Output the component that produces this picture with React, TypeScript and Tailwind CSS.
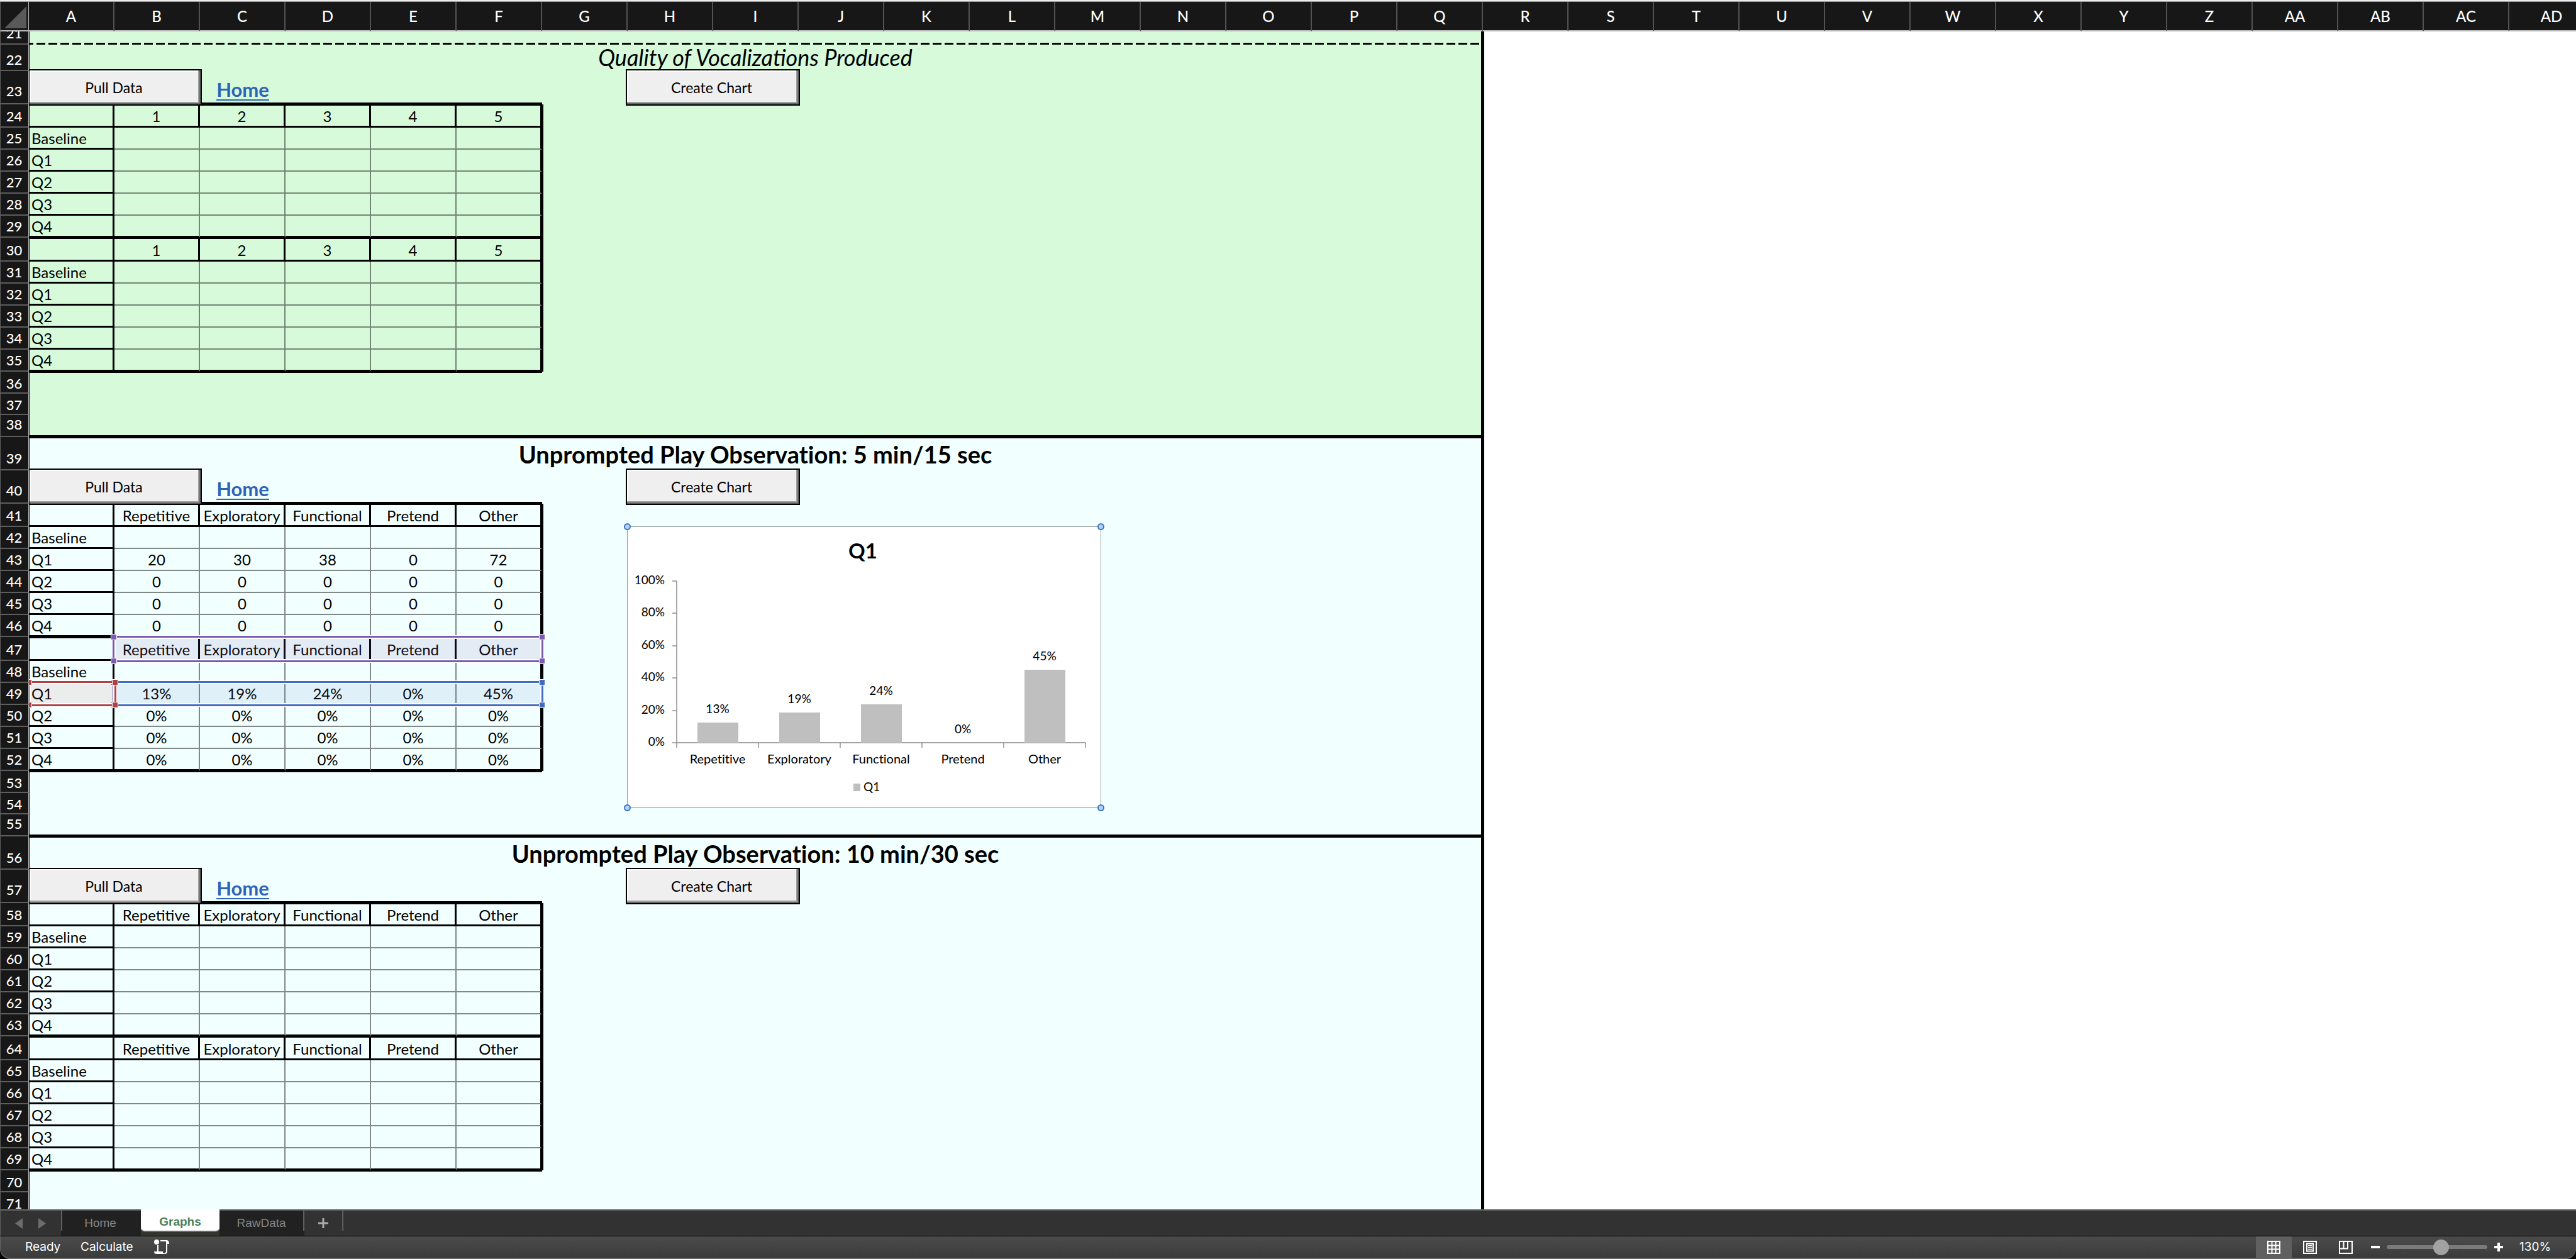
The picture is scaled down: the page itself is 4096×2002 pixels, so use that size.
import React from "react";

type Cells = string[];

const COLUMNS = [
  "A", "B", "C", "D", "E", "F", "G", "H", "I", "J", "K", "L", "M", "N", "O",
  "P", "Q", "R", "S", "T", "U", "V", "W", "X", "Y", "Z", "AA", "AB", "AC", "AD",
];

const PERIODS = ["Baseline", "Q1", "Q2", "Q3", "Q4"];
const LEVELS: Cells = ["1", "2", "3", "4", "5"];
const PLAY_TYPES: Cells = ["Repetitive", "Exploratory", "Functional", "Pretend", "Other"];
const EMPTY: Cells = ["", "", "", "", ""];
const ZEROS: Cells = ["0", "0", "0", "0", "0"];
const ZERO_PCT: Cells = ["0%", "0%", "0%", "0%", "0%"];

const BLANK_GROUP: Cells[] = [EMPTY, EMPTY, EMPTY, EMPTY, EMPTY];
const COUNTS: Cells[] = [EMPTY, ["20", "30", "38", "0", "72"], ZEROS, ZEROS, ZEROS];
const PERCENTS: Cells[] = [EMPTY, ["13%", "19%", "24%", "0%", "45%"], ZERO_PCT, ZERO_PCT, ZERO_PCT];

function RowNumber({ n, pad = "pb-[2px]" }: { n: number; pad?: string }) {
  return (
    <th
      scope="row"
      className={`relative z-20 border-r border-b-2 border-l border-r-[#b8b8b8] border-b-[#5e5e5e] border-l-[#5e5e5e] bg-[#171717] pr-px pl-0 text-center align-bottom text-[22px] font-medium text-white ${pad}`}
    >
      {n}
    </th>
  );
}

function Outside() {
  return <td colSpan={13} className="border-l-2 border-black bg-white p-0" />;
}

function FormButton({ label, className }: { label: string; className: string }) {
  return (
    <button
      type="button"
      className={`absolute z-10 h-[58px] border-2 border-black bg-[#efefef] pr-1 text-center text-[23px] text-black shadow-[inset_-2px_-2px_0_#666,inset_-4px_-4px_0_#a0a0a0,inset_2px_2px_0_#fff] ${className}`}
    >
      {label}
    </button>
  );
}

function RangeBox({ className, handle }: { className: string; handle: string }) {
  const base = `absolute size-2 outline-1 outline-white ${handle}`;
  return (
    <div className={`pointer-events-none absolute border-[3px] shadow-[inset_0_0_0_2px_#fff] outline-1 outline-white ${className}`}>
      <span className={`${base} -top-[5px] -left-[5px]`} />
      <span className={`${base} -top-[5px] -right-[5px]`} />
      <span className={`${base} -bottom-[5px] -left-[5px]`} />
      <span className={`${base} -right-[5px] -bottom-[5px]`} />
    </div>
  );
}

const BARS = [
  { name: "Repetitive", label: "13%", top: 312 },
  { name: "Exploratory", label: "19%", top: 296 },
  { name: "Functional", label: "24%", top: 283 },
  { name: "Pretend", label: "0%", top: 344 },
  { name: "Other", label: "45%", top: 228 },
];
const AXIS = ["100%", "80%", "60%", "40%", "20%", "0%"];
const AXIS_Y = [87, 138, 190, 241, 293, 344];
const TICK_X = [79, 209, 339, 469, 599, 729];

function Chart() {
  const knob = "absolute size-[11px] rounded-full border-2 border-[#3f76c4] bg-[#b3d2f7]";
  return (
    <div className="absolute -top-px -left-px z-10 h-[448px] w-[754px] border border-[#8f9696] bg-white">
      <svg viewBox="1 1 752 446" className="block h-full w-full [font-variant-ligatures:none]" role="img" aria-label="Q1 column chart">
        <text x="375" y="51" textAnchor="middle" className="text-[33px] font-bold">Q1</text>
        <g className="stroke-[#868686]" strokeWidth="1.4" fill="none">
          <path d="M79 87V344H729" />
          {AXIS_Y.map((y) => <path key={y} d={`M72 ${y}H79`} />)}
          {TICK_X.map((x) => <path key={x} d={`M${x} 344V352`} />)}
        </g>
        <g className="text-[19px]">
          {AXIS.map((t, i) => (
            <text key={t} x="60" y={AXIS_Y[i] + 5} textAnchor="end">{t}</text>
          ))}
          {BARS.map((b, i) => (
            <g key={b.name}>
              <rect x={112 + i * 130} y={b.top} width="65" height={344 - b.top} fill="#bfbfbf" />
              <text x={144 + i * 130} y={b.top - 15} textAnchor="middle">{b.label}</text>
              <text x={144 + i * 130} y="377" textAnchor="middle" className="text-[20px]">{b.name}</text>
            </g>
          ))}
          <rect x="360" y="409" width="11" height="12" fill="#bfbfbf" />
          <text x="376" y="421">Q1</text>
        </g>
      </svg>
      <span className={`${knob} -top-1.5 -left-1.5`} />
      <span className={`${knob} -top-1.5 -right-1.5`} />
      <span className={`${knob} -bottom-1.5 -left-1.5`} />
      <span className={`${knob} -right-1.5 -bottom-1.5`} />
    </div>
  );
}

function HeadRow({ n, tall, labels, bg, children }: {
  n: number; tall?: boolean; labels: Cells; bg: string; children?: React.ReactNode;
}) {
  return (
    <tr className={tall ? "h-[38px]" : "h-[37px]"}>
      <RowNumber n={n} />
      <td className={`border-t-2 border-r-3 border-b-3 border-l border-black p-0 ${bg}`} />
      {labels.map((t, i) => (
        <td key={i} className={`relative border-t-2 border-r-3 border-b-3 border-black p-0 pb-px text-center align-bottom ${bg}`}>
          {t}
          {i === 0 && children}
        </td>
      ))}
      <td colSpan={11} className={`border-r-3 border-l-2 border-black p-0 ${bg}`} />
      <Outside />
    </tr>
  );
}

function DataRow({ n, label, values, last, bg, first, overlayA, overlayB, chart }: {
  n: number; label: string; values: Cells; last: boolean; bg: string; first?: boolean;
  overlayA?: React.ReactNode; overlayB?: React.ReactNode; chart?: React.ReactNode;
}) {
  return (
    <tr className="h-[35px]">
      <RowNumber n={n} />
      <td className={`relative border-r-3 border-b-3 border-l border-black p-0 pb-px pl-[3px] text-left align-bottom ${bg}`}>
        {label}
        {overlayA}
      </td>
      {values.map((v, i) => (
        <td
          key={i}
          className={`relative p-0 text-center align-bottom ${bg} ${
            last ? "border-b-3 border-b-black pb-px" : "border-b-2 border-b-[#0007] pb-[2px]"
          } ${i === 4 ? "border-r-3 border-r-black" : "border-r-2 border-r-[#0007]"}`}
        >
          {v}
          {i === 0 && overlayB}
        </td>
      ))}
      {first && chart ? (
        <>
          <td className={`border-l-2 border-black p-0 ${bg}`} />
          <td colSpan={10} className={`relative border-r-3 border-black p-0 ${bg}`}>{chart}</td>
        </>
      ) : (
        <td colSpan={11} className={`border-r-3 border-l-2 border-black p-0 ${bg}`} />
      )}
      <Outside />
    </tr>
  );
}

function Section({ start, title, titleStyle, firstBlock, labels, bg, counts, percents, linked, blanks }: {
  start: number; title: string; titleStyle: string; firstBlock?: boolean; labels: Cells; bg: string;
  counts: Cells[]; percents: Cells[]; linked?: boolean; blanks: string[];
}) {
  return (
    <>
      <tr className={firstBlock ? "h-[42px]" : "h-[53px]"}>
        <RowNumber n={start} pad={firstBlock ? "pb-[2px]" : "pb-[3px]"} />
        <td
          colSpan={17}
          className={`border-r-3 border-l border-black p-0 text-center align-bottom ${bg} ${firstBlock ? "" : "border-t-2"} ${titleStyle}`}
        >
          {title}
        </td>
        <Outside />
      </tr>
      <tr className="h-[53px]">
        <RowNumber n={start + 1} pad="pb-[5px]" />
        <td colSpan={2} className={`relative border-b-3 border-l border-black p-0 align-top ${bg}`}>
          <FormButton label="Pull Data" className="-top-[3px] left-0 w-[274px] border-l-0" />
        </td>
        <td className={`border-b-3 border-black p-0 pb-[3px] text-center align-bottom ${bg}`}>
          <a href="#home" className="text-[31px] leading-9 font-bold text-[#2d63b8] underline decoration-2 underline-offset-4">Home</a>
        </td>
        <td colSpan={3} className={`border-b-3 border-black p-0 ${bg}`} />
        <td className={`p-0 ${bg}`} />
        <td colSpan={10} className={`relative border-r-3 border-black p-0 align-top ${bg}`}>
          <FormButton label="Create Chart" className="-top-[3px] -left-[3px] w-[277px]" />
        </td>
        <Outside />
      </tr>
      <HeadRow n={start + 2} labels={labels} bg={bg} />
      {PERIODS.map((p, i) => (
        <DataRow key={p} n={start + 3 + i} label={p} values={counts[i]} last={i === 4} first={i === 0} bg={bg} chart={linked && <Chart />} />
      ))}
      <HeadRow n={start + 8} tall labels={labels} bg={bg}>
        {linked && (
          <RangeBox className="-top-[4px] -left-[3px] z-10 h-[42px] w-[685px] border-[#7a5ab0] bg-[#7a5ab0]/12" handle="bg-[#7a5ab0]" />
        )}
      </HeadRow>
      {PERIODS.map((p, i) => (
        <DataRow
          key={p}
          n={start + 9 + i}
          label={p}
          values={percents[i]}
          last={i === 4}
          bg={bg}
          overlayA={linked && i === 1 && (
            <RangeBox className="-top-[3px] -left-[3px] z-12 h-[40px] w-[141px] border-[#b04044] bg-[#b04044]/10" handle="bg-[#b04044]" />
          )}
          overlayB={linked && i === 1 && (
            <RangeBox className="-top-[3px] -left-[3px] z-11 h-[40px] w-[685px] border-[#426bc2] bg-[#426bc2]/10" handle="bg-[#426bc2]" />
          )}
        />
      ))}
      {blanks.map((h, i) => (
        <tr key={i} className={h}>
          <RowNumber n={start + 14 + i} pad={i === 2 ? "pb-[4px]" : "pb-0"} />
          <td colSpan={6} className={`border-l border-black p-0 ${bg} ${i === 0 ? "border-t-2" : ""} ${i === 2 ? "border-b-3" : ""}`} />
          <td colSpan={11} className={`border-r-3 border-black p-0 ${bg} ${i === 2 ? "border-b-3" : ""}`} />
          <Outside />
        </tr>
      ))}
    </>
  );
}

function Sheet() {
  return (
    <table className="w-full table-fixed border-separate border-spacing-0 text-[24px] leading-7 text-black">
      <colgroup>
        <col className="w-[46px]" />
        {COLUMNS.map((c) => <col key={c} className={c === "AD" ? "" : "w-[136px]"} />)}
      </colgroup>
      <thead>
        <tr className="h-[47px]">
          <th className="border-r border-b-2 border-l border-r-[#b8b8b8] border-b-[#b8b8b8] border-l-[#5e5e5e] bg-[#171717] p-0">
            <svg viewBox="0 0 44 45" className="block h-[45px] w-[44px]" aria-hidden="true">
              <path d="M6 42H41V7Z" fill="#595959" />
            </svg>
          </th>
          {COLUMNS.map((c) => (
            <th
              key={c}
              scope="col"
              className={`border-b-2 border-b-[#b8b8b8] bg-[#171717] p-0 pt-px text-center font-medium text-white ${
                c === "AD" ? "pl-7" : "border-r-2 border-r-[#525252]"
              }`}
            >
              {c}
            </th>
          ))}
        </tr>
      </thead>
      <tbody>
        <tr className="h-[21px]">
          <th scope="row" className="border-r border-b-2 border-l border-r-[#b8b8b8] border-b-[#5e5e5e] border-l-[#5e5e5e] bg-[#171717] p-0 align-bottom text-[22px] font-medium text-white">
            <div className="flex h-[19px] items-end justify-center overflow-hidden pr-px pb-[2px]">21</div>
          </th>
          <td colSpan={17} className="border-r-3 border-l border-black bg-[#d7fadb] p-0 align-bottom">
            <div className="h-[3px] bg-[repeating-linear-gradient(to_right,#000_0_6px,transparent_6px_11px,#000_11px_19px)]" />
          </td>
          <Outside />
        </tr>
        <Section
          start={22}
          title="Quality of Vocalizations Produced"
          titleStyle="text-[36px] leading-[38px] italic pb-[3px]"
          firstBlock
          labels={LEVELS}
          bg="bg-[#d7fadb]"
          counts={BLANK_GROUP}
          percents={BLANK_GROUP}
          blanks={["h-[35px]", "h-[34px]", "h-[35px]"]}
        />
        <Section
          start={39}
          title="Unprompted Play Observation: 5 min/15 sec"
          titleStyle="text-[38px] leading-[44px] font-bold pb-[4px] [font-variant-ligatures:none]"
          labels={PLAY_TYPES}
          bg="bg-[#f2ffff]"
          counts={COUNTS}
          percents={PERCENTS}
          linked
          blanks={["h-[35px]", "h-[34px]", "h-[35px]"]}
        />
        <Section
          start={56}
          title="Unprompted Play Observation: 10 min/30 sec"
          titleStyle="text-[38px] leading-[44px] font-bold pb-[4px] [font-variant-ligatures:none]"
          labels={PLAY_TYPES}
          bg="bg-[#f2ffff]"
          counts={BLANK_GROUP}
          percents={BLANK_GROUP}
          blanks={["h-[35px]", "h-[34px]"]}
        />
      </tbody>
    </table>
  );
}

function TabBar() {
  const rule = "mb-2 border-l-2 border-[#5f5f5f]";
  return (
    <nav className="flex h-[42px] shrink-0 border-t-2 border-l border-[#666] border-l-[#5e5e5e] bg-[#323232] text-[19px] text-[#858585]" aria-label="Sheets">
      <div className="flex w-[96px] items-center gap-[25px] pl-[23px]">
        <button type="button" aria-label="Previous sheet">
          <svg viewBox="0 0 12 17" className="block h-[17px] w-[12px]"><path d="M12 0V17L0 8.5Z" fill="#6c6c6c" /></svg>
        </button>
        <button type="button" aria-label="Next sheet">
          <svg viewBox="0 0 12 17" className="block h-[17px] w-[12px]"><path d="M0 0V17L12 8.5Z" fill="#6c6c6c" /></svg>
        </button>
      </div>
      <div className="flex w-[127px] bg-[#212121]">
        <span className={rule} />
        <button type="button" className="flex-1 pr-1">Home</button>
      </div>
      <div className="-mt-0.5 w-[125px] bg-[#33332f]">
        <button type="button" aria-current="page" className="h-[36px] w-full rounded-b-md border-b-2 border-[#6a6a70] bg-white pt-1.5 font-bold text-[#477f57]">Graphs</button>
      </div>
      <div className="flex w-[135px] bg-[#212121]">
        <button type="button" className="flex-1">RawData</button>
        <span className={rule} />
      </div>
      <button type="button" aria-label="Add sheet" className="flex w-[60px] items-center justify-center">
        <svg viewBox="0 0 16 16" className="size-4"><path d="M8 0V16M0 8H16" stroke="#aaa" strokeWidth="3" /></svg>
      </button>
      <span className={rule} />
    </nav>
  );
}

function StatusBar() {
  const view = "flex w-[57px] items-center justify-center";
  return (
    <footer className="mt-px flex h-[36px] shrink-0 items-stretch rounded-b-2xl border-b-2 border-l border-[#666] bg-linear-to-b from-[#4b4b4b] to-[#3b3b3b] pl-[39px] font-[Inter,'Liberation_Sans',sans-serif] text-[19px] text-white">
      <span className="w-[88px] self-center">Ready</span>
      <span className="w-[117px] self-center">Calculate</span>
      <button type="button" aria-label="Record macro" className="self-center">
        <svg viewBox="0 0 24 24" className="block size-6">
          <circle cx="4" cy="4" r="4" fill="#fff" />
          <path d="M6 9V19" stroke="#fff" strokeWidth="2" />
          <path d="M10 2H20V19Q20 22 17 22" stroke="#fff" strokeWidth="2" fill="none" />
          <path d="M19 1H20Q24 1 24 7H19Z" fill="#fff" />
          <path d="M0 19H14V20Q14 22 17 22V23H4Q0 23 0 19Z" fill="#fff" />
        </svg>
      </button>
      <div className="ml-auto flex">
        <button type="button" aria-label="Normal view" className={`${view} bg-[#606060]`}>
          <svg viewBox="0 0 21 21" className="size-[21px]" fill="none" stroke="#fff" strokeWidth="2">
            <path d="M1 1H20V20H1ZM7.5 1V20M13.5 1V20M1 7.5H20M1 13.5H20" />
          </svg>
        </button>
        <button type="button" aria-label="Page layout view" className={view}>
          <svg viewBox="0 0 22 21" className="h-[21px] w-[22px]" fill="none" stroke="#fff" strokeWidth="2">
            <path d="M1 1H21V20H1ZM6 4.5H16V16.5H6Z" />
            <path d="M8 7.5H14M8 10.5H14M8 13.5H14" strokeWidth="1.6" />
          </svg>
        </button>
        <button type="button" aria-label="Page break view" className={view}>
          <svg viewBox="0 0 22 21" className="h-[21px] w-[22px]" fill="none" stroke="#fff" strokeWidth="2">
            <path d="M1 1H21V20H1ZM1 12.5H14V1M7.5 1V12.5" />
          </svg>
        </button>
      </div>
      <button type="button" aria-label="Zoom out" className="ml-3 self-center">
        <svg viewBox="0 0 14 14" className="size-[14px]"><path d="M0 7H14" stroke="#fff" strokeWidth="4" /></svg>
      </button>
      <input
        type="range"
        min={0}
        max={100}
        defaultValue={55}
        aria-label="Zoom"
        className="mx-[11px] h-[6px] w-[160px] appearance-none self-center rounded-full bg-[#7a7a7a] [&::-webkit-slider-thumb]:size-[25px] [&::-webkit-slider-thumb]:appearance-none [&::-webkit-slider-thumb]:rounded-full [&::-webkit-slider-thumb]:bg-[#a2a2a2]"
      />
      <button type="button" aria-label="Zoom in" className="self-center">
        <svg viewBox="0 0 14 14" className="size-[14px]"><path d="M0 7H14M7 0V14" stroke="#fff" strokeWidth="4" /></svg>
      </button>
      <span className="w-[116px] self-center pl-[26px]">130%</span>
    </footer>
  );
}

export default function App() {
  return (
    <div className="flex h-screen flex-col overflow-hidden bg-black font-['Liberation_Sans',Arial,sans-serif]">
      <div className="h-[3px] shrink-0 border-b border-[#9a9a9a] bg-[#ececec]" />
      <main className="min-h-0 flex-1 overflow-hidden bg-white font-[Lato,'Liberation_Sans',sans-serif]">
        <Sheet />
      </main>
      <TabBar />
      <StatusBar />
    </div>
  );
}
